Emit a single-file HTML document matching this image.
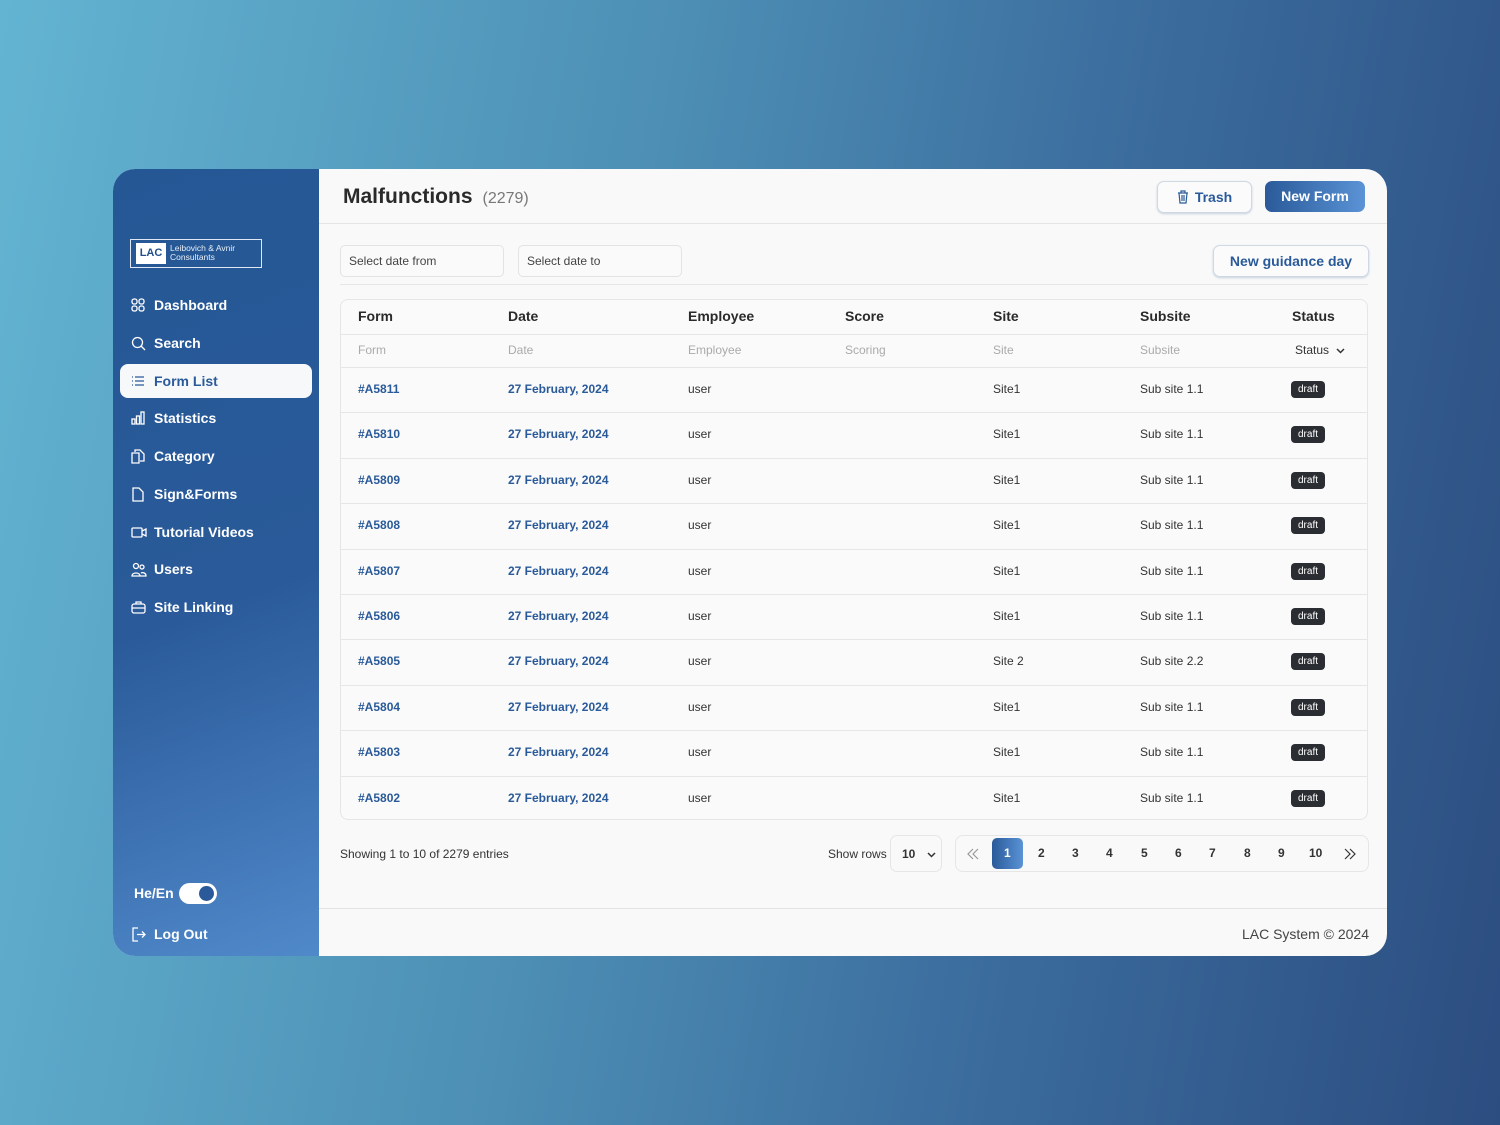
<!DOCTYPE html>
<html><head><style>
*{box-sizing:border-box;margin:0;padding:0}
body{width:1500px;height:1125px;overflow:hidden;font-family:"Liberation Sans",Arial,sans-serif;background:linear-gradient(100deg,#63b4d2 0%,#4d8fb5 40%,#3a6a9c 70%,#2c4d80 100%);position:relative}
.card{position:absolute;left:113px;top:169px;width:1274px;height:787px;border-radius:22px;overflow:hidden;background:#f9f9f9}
.side{position:absolute;left:0;top:0;width:206px;height:787px;background:linear-gradient(160deg,#255795 0%,#2a5a99 55%,#5089ca 100%);color:#fff}
.logo{position:absolute;left:17px;top:70px;width:132px;height:29px;border:1px solid #dfe8f3}
.logo .b{position:absolute;left:5px;top:3px;width:30px;height:21px;background:#fff;color:#20508c;font-weight:bold;font-size:11px;text-align:center;line-height:21px}
.logo .t{position:absolute;left:39px;top:4px;font-size:8.5px;line-height:9px;color:#e6eef7}
.nav{position:absolute;left:7px;width:192px;height:34px;font-weight:bold;font-size:14px;line-height:34px;padding-left:34px}
.nav svg{position:absolute;left:11px;top:10px}
.nav.act{background:#f7f8fa;color:#2a5a99;border-radius:8px}
.main{position:absolute;left:206px;top:0;right:0;bottom:0}
.hd{position:absolute;left:0;top:0;right:0;height:55px;border-bottom:1px solid #e5e5e5}
h1{position:absolute;left:24px;top:16px;font-size:21px;color:#2a2a2a}
h1 span{font-weight:normal;font-size:16px;color:#777;margin-left:10px}
.btn{position:absolute;border-radius:7px;font-weight:bold;font-size:14px;text-align:center}
.inp{position:absolute;top:76px;width:164px;height:32px;border:1px solid #e3e3e3;border-radius:5px;font-size:12px;color:#444;line-height:30px;padding-left:8px;background:#fafafa}
.tbl{position:absolute;left:21px;top:130px;width:1028px;height:521px;border:1px solid #e6e6e6;border-radius:8px;background:#fafafa}
.row{position:absolute;left:0;width:100%;border-bottom:1px solid #e6e6e6}
.c{position:absolute;font-size:12px}
.th{font-weight:bold;font-size:14px;color:#2a2a2a}
.ph{font-size:12px;color:#aaa}
.id{font-weight:bold;color:#2a5a99}
.draft{position:absolute;left:950px;background:#2a2e33;color:#fff;font-size:10px;border-radius:4px;width:34px;height:17px;text-align:center;line-height:17px}
.pg{position:absolute;left:636px;top:666px;width:414px;height:37px;border:1px solid #e6e6e6;border-radius:8px}
.pg span{position:absolute;top:10px;font-size:12px;font-weight:bold;color:#333}
</style></head><body>
<div class="card">
<div class="side">
<div class="logo"><div class="b">LAC</div><div class="t">Leibovich &amp; Avnir<br>Consultants</div></div>
<div class="nav" style="top:119px"><svg width="14" height="14" fill="none" stroke="#fff" stroke-width="1.3"><rect x="1" y="1" width="5" height="5" rx="2"/><rect x="8" y="1" width="5" height="5" rx="2"/><rect x="1" y="8" width="5" height="5" rx="2"/><rect x="8" y="8" width="5" height="5" rx="2"/></svg>Dashboard</div>
<div class="nav" style="top:157px"><svg width="15" height="15" fill="none" stroke="#fff" stroke-width="1.3"><circle cx="6.5" cy="6.5" r="5"/><path d="M10 10l4 4"/></svg>Search</div>
<div class="nav act" style="top:195px"><svg width="14" height="14" fill="none" stroke="#2a5a99" stroke-width="1.3"><path d="M1 3h1M1 7h1M1 11h1M4 3h9M4 7h9M4 11h9"/></svg>Form List</div>
<div class="nav" style="top:232px"><svg width="14" height="14" fill="none" stroke="#fff" stroke-width="1.3"><rect x="1" y="8" width="3" height="5"/><rect x="5.5" y="5" width="3" height="8"/><rect x="10" y="1" width="3" height="12"/></svg>Statistics</div>
<div class="nav" style="top:270px"><svg width="14" height="15" fill="none" stroke="#fff" stroke-width="1.3"><path d="M4 3V1h5l4 4v7H9M1 4h7l0 10H1z"/></svg>Category</div>
<div class="nav" style="top:308px"><svg width="14" height="15" fill="none" stroke="#fff" stroke-width="1.3"><path d="M2 1h6l4 4v9H2z"/></svg>Sign&amp;Forms</div>
<div class="nav" style="top:346px"><svg width="16" height="14" fill="none" stroke="#fff" stroke-width="1.3"><rect x="1" y="3" width="10" height="9" rx="1"/><path d="M11 6l4-2v7l-4-2"/></svg>Tutorial Videos</div>
<div class="nav" style="top:383px"><svg width="16" height="15" fill="none" stroke="#fff" stroke-width="1.3"><circle cx="5" cy="4" r="2.5"/><circle cx="11" cy="5" r="2"/><path d="M1 14c0-4 8-4 8 0zM9 14h6c0-3-3-4-5-3"/></svg>Users</div>
<div class="nav" style="top:421px"><svg width="15" height="14" fill="none" stroke="#fff" stroke-width="1.3"><rect x="1" y="4" width="13" height="9" rx="2"/><path d="M5 4V2h5v2M1 8h13"/></svg>Site Linking</div>
<div style="position:absolute;left:21px;top:716px;font-weight:bold;font-size:14px">He/En</div>
<div style="position:absolute;left:66px;top:714px;width:38px;height:21px;border-radius:11px;background:#fff"><div style="position:absolute;right:3px;top:3px;width:15px;height:15px;border-radius:50%;background:#2a5a99"></div></div>
<div class="nav" style="top:748px;left:7px"><svg width="15" height="15" fill="none" stroke="#fff" stroke-width="1.3"><path d="M7 1H2v13h5M6 7.5h8M11 4.5l3 3-3 3"/></svg>Log Out</div>
</div>
<div class="main">
<div class="hd"><h1>Malfunctions<span>(2279)</span></h1>
<div class="btn" style="left:838px;top:12px;width:95px;height:32px;border:1px solid #cfd8e3;background:#fbfbfb;color:#2a5a99;line-height:30px;box-shadow:0 1px 2px #c5d0de"><svg width="12" height="14" style="vertical-align:-2px;margin-right:6px" fill="none" stroke="#2a5a99" stroke-width="1.2"><path d="M1 3h10M4 3V1h4v2M2 3l1 10h6l1-10M5 5v6M7 5v6"/></svg>Trash</div>
<div class="btn" style="left:946px;top:12px;width:100px;height:31px;background:linear-gradient(90deg,#2a5a99,#5a93d6);color:#fff;line-height:31px">New Form</div>
</div>
<div class="inp" style="left:21px">Select date from</div>
<div class="inp" style="left:199px">Select date to</div>
<div class="btn" style="left:894px;top:76px;width:156px;height:32px;border:1px solid #cfd8e3;color:#2a5a99;line-height:30px;background:#fbfbfb;box-shadow:0 1px 2px #c5d0de">New guidance day</div>
<div style="position:absolute;left:21px;top:115px;width:1028px;border-top:1px solid #e6e6e6"></div>
<div class="tbl">
<div class="row" style="top:0;height:35px">
<div class="c th" style="left:17px;top:8px">Form</div><div class="c th" style="left:167px;top:8px">Date</div><div class="c th" style="left:347px;top:8px">Employee</div><div class="c th" style="left:504px;top:8px">Score</div><div class="c th" style="left:652px;top:8px">Site</div><div class="c th" style="left:799px;top:8px">Subsite</div><div class="c th" style="left:951px;top:8px">Status</div></div>
<div class="row" style="top:35px;height:33px">
<div class="c ph" style="left:17px;top:8px">Form</div><div class="c ph" style="left:167px;top:8px">Date</div><div class="c ph" style="left:347px;top:8px">Employee</div><div class="c ph" style="left:504px;top:8px">Scoring</div><div class="c ph" style="left:652px;top:8px">Site</div><div class="c ph" style="left:799px;top:8px">Subsite</div><div class="c" style="left:954px;top:8px;color:#333">Status <svg width="9" height="6" style="margin-left:4px" fill="none" stroke="#333" stroke-width="1.5"><path d="M1 1l3.5 3.5L8 1"/></svg></div></div>
<div id="rows"></div>
</div>
<div style="position:absolute;left:21px;top:678px;font-size:12px;color:#333">Showing 1 to 10 of 2279 entries</div>
<div style="position:absolute;left:509px;top:678px;font-size:12px;color:#333">Show rows</div>
<div style="position:absolute;left:571px;top:666px;width:52px;height:37px;border:1px solid #e6e6e6;border-radius:7px;font-size:12px;font-weight:bold;color:#333;padding:11px 0 0 11px">10 <svg width="9" height="6" style="margin-left:8px" fill="none" stroke="#333" stroke-width="1.5"><path d="M1 1l3.5 3.5L8 1"/></svg></div>
<div class="pg">
<svg style="position:absolute;left:11px;top:12px" width="12" height="12" fill="none" stroke="#999" stroke-width="1.2"><path d="M6 1L1 6l5 5M11 1L6 6l5 5"/></svg>
<div style="position:absolute;left:36px;top:2px;width:31px;height:31px;border-radius:5px;background:linear-gradient(90deg,#2a5a99,#5a93d6)"></div>
<span style="left:48px;color:#fff">1</span><span style="left:82px">2</span><span style="left:116px">3</span><span style="left:150px">4</span><span style="left:185px">5</span><span style="left:219px">6</span><span style="left:253px">7</span><span style="left:288px">8</span><span style="left:322px">9</span><span style="left:353px">10</span>
<svg style="position:absolute;left:388px;top:12px" width="12" height="12" fill="none" stroke="#333" stroke-width="1.2"><path d="M1 1l5 5-5 5M6 1l5 5-5 5"/></svg>
</div>
<div style="position:absolute;left:0;right:0;top:739px;border-top:1px solid #e3e3e3"></div>
<div style="position:absolute;right:18px;top:757px;font-size:14px;color:#444">LAC System © 2024</div>
</div>
</div>
<script>
var ids=["5811","5810","5809","5808","5807","5806","5805","5804","5803","5802"],h="";
for(var i=0;i<10;i++){var t=68+i*45.4,s=i==6?"Site 2":"Site1",ss=i==6?"Sub site 2.2":"Sub site 1.1";
h+='<div class="row" style="top:'+t+'px;height:45.4px;'+(i==9?'border:none':'')+'"><div class="c id" style="left:17px;top:14px">#A'+ids[i]+'</div><div class="c id" style="left:167px;top:14px">27 February, 2024</div><div class="c" style="left:347px;top:14px;color:#333">user</div><div class="c" style="left:652px;top:14px;color:#333">'+s+'</div><div class="c" style="left:799px;top:14px;color:#333">'+ss+'</div><div class="draft" style="top:13px">draft</div></div>';}
document.getElementById("rows").innerHTML=h;
</script>
</body></html>
